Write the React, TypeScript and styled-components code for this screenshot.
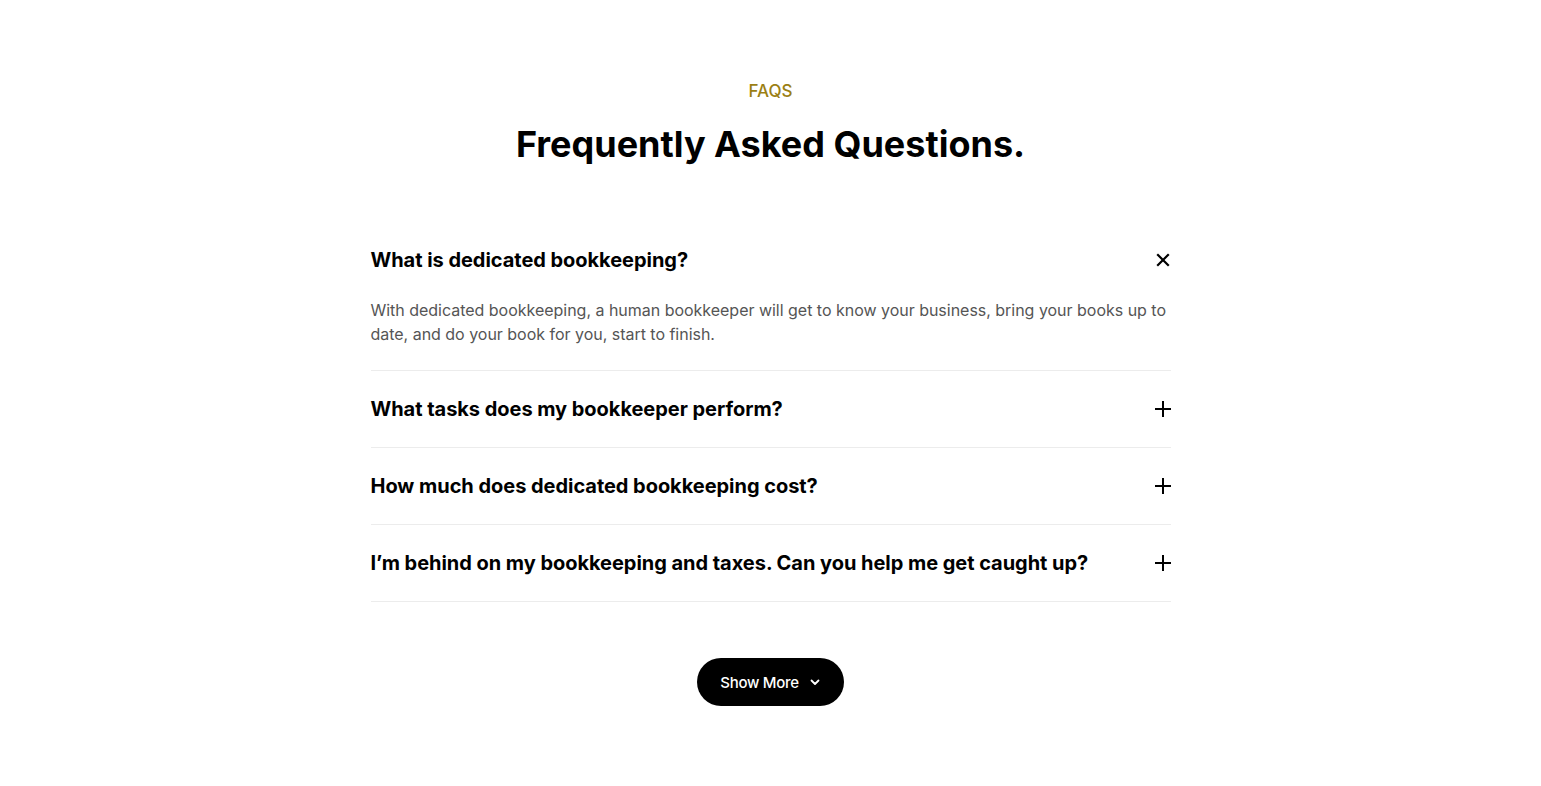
import styled, { createGlobalStyle } from "styled-components";

const faqs = [
  {
    q: "What is dedicated bookkeeping?",
    a: "With dedicated bookkeeping, a human bookkeeper will get to know your business, bring your books up to date, and do your book for you, start to finish.",
    open: true,
  },
  { q: "What tasks does my bookkeeper perform?", a: "", open: false },
  { q: "How much does dedicated bookkeeping cost?", a: "", open: false },
  {
    q: "I\u2019m behind on my bookkeeping and taxes. Can you help me get caught up?",
    a: "",
    open: false,
  },
];

export default function App() {
  return (
    <>
      <GlobalStyle />
      <StSection>
        <StEyebrow>FAQS</StEyebrow>
        <StTitle>Frequently Asked Questions.</StTitle>
        <StList>
          {faqs.map((item, i) => (
            <StItem key={i}>
              <StQuestion>
                <span>{item.q}</span>
                <StIcon>
                  {item.open ? (
                    <svg width="14" height="14" viewBox="0 0 14 14">
                      <path d="M2 2L12 12M12 2L2 12" stroke="#000" strokeWidth="2.2" strokeLinecap="square" />
                    </svg>
                  ) : (
                    <svg width="18" height="18" viewBox="0 0 18 18">
                      <path d="M9 1V17M1 9H17" stroke="#000" strokeWidth="2" />
                    </svg>
                  )}
                </StIcon>
              </StQuestion>
              {item.open && <StAnswer>{item.a}</StAnswer>}
            </StItem>
          ))}
        </StList>
        <StButton>
          Show More
          <svg width="12" height="12" viewBox="0 0 12 12">
            <path d="M2.5 4.5L6 8L9.5 4.5" stroke="#fff" strokeWidth="1.8" fill="none" strokeLinecap="round" strokeLinejoin="round" />
          </svg>
        </StButton>
      </StSection>
    </>
  );
}

const GlobalStyle = createGlobalStyle`
  body {
    margin: 0;
    background: #fff;
    font-family: Inter, "Noto Sans", sans-serif;
    color: #000;
  }
`;

const StSection = styled.section`
  display: flex;
  flex-direction: column;
  align-items: center;
  padding: 79px 0 80px;
`;

const StEyebrow = styled.p`
  margin: 0;
  font-size: 17px;
  line-height: 24px;
  font-weight: 500;
  color: #9b7f14;
`;

const StTitle = styled.h2`
  margin: 19px 0 0;
  font-size: 36px;
  line-height: 44px;
  font-weight: 700;
`;

const StList = styled.div`
  width: 800px;
  margin-top: 56px;
  display: flex;
  flex-direction: column;
`;

const StItem = styled.div`
  padding: 24px 0;
  border-bottom: 1px solid #ececec;
`;

const StQuestion = styled.div`
  display: flex;
  justify-content: space-between;
  align-items: center;
  font-size: 20px;
  line-height: 28px;
  font-weight: 700;
  letter-spacing: -0.04px;
`;

const StIcon = styled.span`
  display: flex;
  align-items: center;
  justify-content: center;
  width: 20px;
  height: 20px;
  margin-right: -2px;
`;

const StAnswer = styled.p`
  margin: 24px 0 0;
  font-size: 16px;
  line-height: 24px;
  color: #555;
  letter-spacing: -0.02px;
`;

const StButton = styled.button`
  margin-top: 56px;
  display: flex;
  align-items: center;
  gap: 10px;
  height: 48px;
  padding: 0 23px;
  border: none;
  border-radius: 24px;
  background: #000;
  color: #fff;
  font-family: Inter, sans-serif;
  font-size: 15px;
  font-weight: 500;
  letter-spacing: -0.3px;
  cursor: pointer;
`;
